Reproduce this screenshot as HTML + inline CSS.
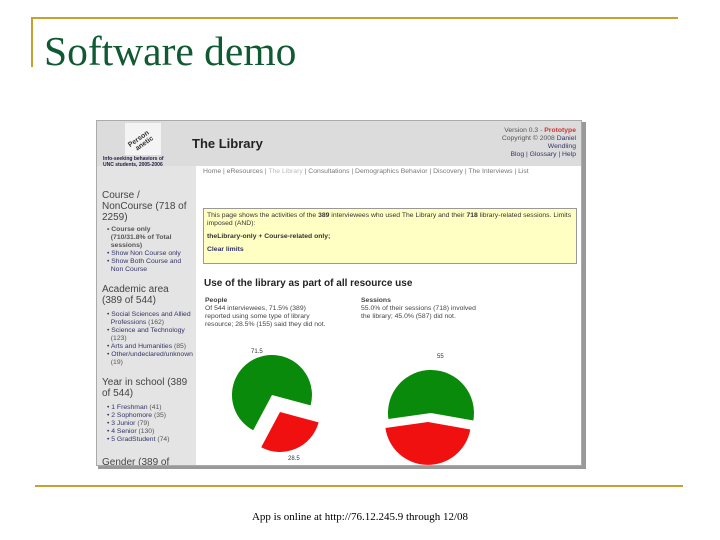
<!DOCTYPE html>
<html><head><meta charset="utf-8"><style>
body{margin:0;width:720px;height:540px;background:#fff;position:relative;overflow:hidden;font-family:"Liberation Sans",sans-serif}
.a{position:absolute}
.s{font-size:6.8px;color:#555;line-height:8px}
.l{color:#336}
</style></head><body>
<div class="a" style="left:31px;top:17px;width:647px;height:2px;background:#c8a030"></div>
<div class="a" style="left:31px;top:17px;width:2px;height:50px;background:#c8a030"></div>
<div class="a" style="left:44px;top:27px;font:41.5px 'Liberation Serif',serif;color:#0f5a32;white-space:nowrap">Software demo</div>
<div class="a" style="left:35px;top:485px;width:648px;height:2px;background:#c8a030"></div>
<div class="a" style="left:0;width:720px;top:511px;text-align:center;font:11px 'Liberation Serif',serif;color:#000">App is online at http://76.12.245.9 through 12/08</div>

<div class="a" style="left:98px;top:122px;width:488px;height:347px;background:#999"></div>
<div class="a" style="left:96px;top:120px;width:486px;height:346px;background:#fff;overflow:hidden;border:1px solid #aaa;box-sizing:border-box">
 <div class="a" style="left:0;top:0;width:486px;height:45px;background:#dcdcdc"></div>
 <div class="a" style="left:0;top:45px;width:99px;height:305px;background:#e4e4e4"></div>
 <div class="a" style="left:28px;top:2px;width:36px;height:32px;background:#f4f4f4"></div>
 <div class="a" style="left:32px;top:14px;font:bold 7px sans-serif;color:#333;transform:rotate(-35deg)">Person<br>&nbsp;&nbsp;anetic</div>
 <div class="a" style="left:6px;top:35px;font:bold 5px sans-serif;color:#224;line-height:6px">Info-seeking behaviors of<br>UNC students, 2005-2006</div>
 <div class="a" style="left:95px;top:15px;font:bold 13px sans-serif;color:#222">The Library</div>
 <div class="a s" style="right:5px;top:6px;text-align:right;width:120px">Version 0.3 - <b style="color:#c33">Prototype</b><br>Copyright © 2008 <span class="l">Daniel<br>Wendling</span><br><span class="l">Blog | Glossary | Help</span></div>
 <div class="a s" style="left:106px;top:47px;width:370px;color:#777">Home | eResources | <span style="color:#bbb">The Library</span> | Consultations | Demographics Behavior | Discovery | The Interviews | List</div>
 <div class="a" style="left:5px;top:69px;font:10px sans-serif;color:#444;line-height:11px">Course /<br>NonCourse (718 of<br>2259)</div>
 <div class="a s" style="left:10px;top:105px;width:88px"><b>• Course only<br>&nbsp; (710/31.8% of Total<br>&nbsp; sessions)</b><br><span class="l">• Show Non Course only<br>• Show Both Course and<br>&nbsp; Non Course</span></div>
 <div class="a" style="left:5px;top:163px;font:10px sans-serif;color:#444;line-height:11px">Academic area<br>(389 of 544)</div>
 <div class="a s" style="left:10px;top:190px;width:95px"><span class="l">• Social Sciences and Allied<br>&nbsp; Professions</span> (162)<br><span class="l">• Science and Technology</span><br>&nbsp; (123)<br><span class="l">• Arts and Humanities</span> (85)<br><span class="l">• Other/undeclared/unknown</span><br>&nbsp; (19)</div>
 <div class="a" style="left:5px;top:256px;font:10px sans-serif;color:#444;line-height:11px">Year in school (389<br>of 544)</div>
 <div class="a s" style="left:10px;top:283px"><span class="l">• 1 Freshman</span> (41)<br><span class="l">• 2 Sophomore</span> (35)<br><span class="l">• 3 Junior</span> (79)<br><span class="l">• 4 Senior</span> (130)<br><span class="l">• 5 GradStudent</span> (74)</div>
 <div class="a" style="left:5px;top:336px;font:10px sans-serif;color:#444">Gender (389 of</div>
 <div class="a s" style="left:106px;top:87px;width:374px;height:56px;background:#ffffc4;border:1px solid #999;box-sizing:border-box;padding:3px;color:#333">This page shows the activities of the <b>389</b> interviewees who used The Library and their <b>718</b> library-related sessions. Limits imposed (AND):<br><div style="height:5px"></div><b>theLibrary-only + Course-related only;</b><br><div style="height:5px"></div><b class="l">Clear limits</b></div>
 <div class="a" style="left:107px;top:157px;font:bold 10px sans-serif;color:#222">Use of the library as part of all resource use</div>
 <div class="a s" style="left:108px;top:176px;color:#444"><b>People</b><br>Of 544 interviewees, 71.5% (389)<br>reported using some type of library<br>resource; 28.5% (155) said they did not.</div>
 <div class="a s" style="left:264px;top:176px;color:#444"><b>Sessions</b><br>55.0% of their sessions (718) involved<br>the library; 45.0% (587) did not.</div>
</div>
<svg class="a" style="left:0;top:0" width="720" height="540">
 <path d="M272,395 L310.6,405.4 A40,40 0 1 0 253.2,430.3 Z" fill="#0a8a0a"/>
 <path d="M280,412 L261.2,447.3 A40,40 0 0 0 318.6,422.4 Z" fill="#f01010"/>
 <path d="M431,413 L473.3,420.5 A43,43 0 1 0 388.4,419 Z" fill="#0a8a0a"/>
 <path d="M428,422 L385.4,428 A43,43 0 0 0 470.3,429.5 Z" fill="#f01010"/>
 <text x="251" y="353" font-size="6" fill="#333" font-family="Liberation Sans">71.5</text>
 <text x="288" y="460" font-size="6" fill="#333" font-family="Liberation Sans">28.5</text>
 <text x="437" y="358" font-size="6" fill="#333" font-family="Liberation Sans">55</text>
</svg>
</body></html>
